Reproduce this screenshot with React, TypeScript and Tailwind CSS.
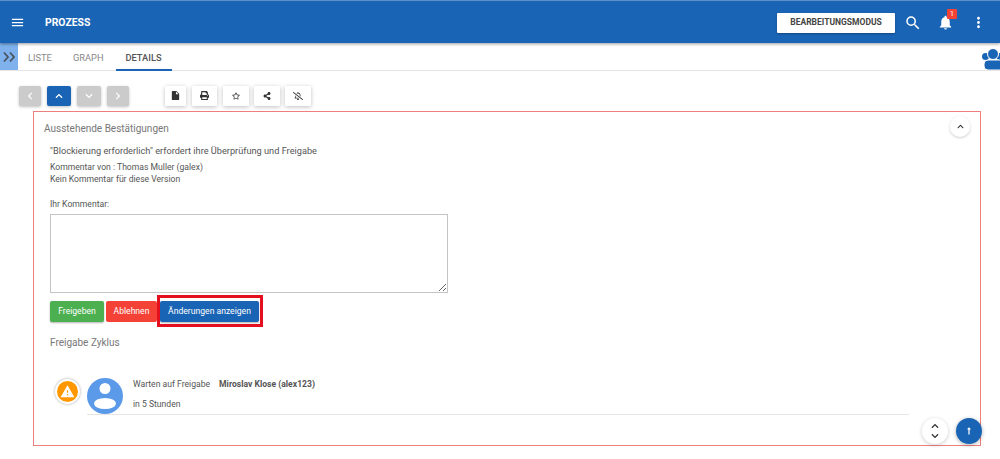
import React from "react";
import { MdMenu, MdSearch, MdNotifications, MdMoreVert, MdInsertDriveFile } from "react-icons/md";
import { FaChevronLeft, FaChevronRight, FaChevronUp, FaChevronDown, FaPrint, FaRegStar, FaShareAlt, FaRegBellSlash, FaLongArrowAltUp } from "react-icons/fa";

const navBtn = "h-[20px] rounded-[2px] flex items-center justify-center shadow-[0_1px_3px_rgba(0,0,0,0.25)] text-white";
const toolBtn = "h-[20px] rounded-[1px] bg-white flex items-center justify-center shadow-[0_1px_4px_rgba(0,0,0,0.25)] text-[#333]";

function Users() {
  return (
    <svg width="18" height="22" viewBox="0 0 18 22" fill="#1a64b5">
      <circle cx="3.5" cy="8.5" r="3.5" />
      <circle cx="18" cy="8.5" r="3.5" />
      <circle cx="11" cy="6" r="5.5" stroke="white" strokeWidth="1" />
      <rect x="2" y="12" width="22" height="10" rx="4" stroke="white" strokeWidth="1" />
    </svg>
  );
}

export default function App() {
  return (
    <div className="w-[1000px] h-[459px] overflow-hidden bg-white flex flex-col font-['Roboto','Liberation_Sans',sans-serif] text-[#555]">
      <header className="h-[43px] shrink-0 bg-[#1a64b5] border-t border-[#5d8fc9] shadow-[0_1px_3px_rgba(0,0,0,0.4)] flex items-center pl-[10px] pr-[13px] pt-[1px] relative z-10 text-white">
        <MdMenu size={15} />
        <span className="ml-[20px] text-[10.4px] font-bold">PROZESS</span>
        <div className="ml-auto flex items-center">
          <button className="w-[118px] h-[20px] bg-white rounded-[1px] text-[#444] text-[8.5px] font-bold shadow-[0_1px_2px_rgba(0,0,0,0.3)]">BEARBEITUNGSMODUS</button>
          <MdSearch size={18} className="ml-[9px]" />
          <div className="relative ml-[15px]">
            <MdNotifications size={17} />
            <span className="absolute -top-[5px] left-[10px] w-[10px] h-[10px] rounded-[1px] bg-[#f44336] text-[7px] leading-[10px] text-center">1</span>
          </div>
          <MdMoreVert size={17} className="ml-[16px]" />
        </div>
      </header>

      <div className="h-[28px] shrink-0 flex border-b border-[#e5e5e5] relative">
        <div className="w-[18px] h-full bg-[#7fb2ec] flex items-center justify-center text-[#4a5560]">
          <svg width="12" height="12" viewBox="0 0 12 12" fill="none" stroke="currentColor" strokeWidth="1.8">
            <polyline points="1,1.5 5,6 1,10.5" />
            <polyline points="7,1.5 11,6 7,10.5" />
          </svg>
        </div>
        <div className="ml-[10px] flex text-[9.3px] leading-[29px]">
          <span className="text-[#888]">LISTE</span>
          <span className="ml-[21px] text-[#888]">GRAPH</span>
          <span className="ml-[12px] w-[56px] text-center text-[#555] font-medium border-b-2 border-[#1a64b5] h-[28px]">DETAILS</span>
        </div>
        <div className="absolute right-0 top-[5px] overflow-hidden"><Users /></div>
      </div>

      <div className="h-[40px] shrink-0 flex items-center pt-[9px] pl-[19px]">
        <div className={`${navBtn} w-[22px] bg-[#cbcbcb]`}><FaChevronLeft size={8} /></div>
        <div className={`${navBtn} ml-[6px] w-[24px] bg-[#1a64b5]`}><FaChevronUp size={8} /></div>
        <div className={`${navBtn} ml-[6px] w-[24px] bg-[#cbcbcb]`}><FaChevronDown size={8} /></div>
        <div className={`${navBtn} ml-[6px] w-[22px] bg-[#cbcbcb]`}><FaChevronRight size={8} /></div>
        <div className={`${toolBtn} ml-[36px] w-[21px]`}><MdInsertDriveFile size={11} /></div>
        <div className={`${toolBtn} ml-[6px] w-[25px]`}><FaPrint size={9} /></div>
        <div className={`${toolBtn} ml-[6px] w-[26px]`}><FaRegStar size={8} /></div>
        <div className={`${toolBtn} ml-[5px] w-[26px]`}><FaShareAlt size={8} /></div>
        <div className={`${toolBtn} ml-[5px] w-[26px]`}><FaRegBellSlash size={10} /></div>
      </div>

      <section className="relative ml-[33px] w-[948px] h-[335px] border border-[#ef7f7f]">
        <h2 className="mt-[10px] ml-[10px] text-[10px] leading-[13px] text-[#777]">Ausstehende Bestätigungen</h2>
        <button className="absolute right-[10px] top-[4px] w-[20px] h-[21px] rounded-full bg-white shadow-[0_1px_3px_rgba(0,0,0,0.2)] flex items-center justify-center text-[#333]">
          <FaChevronUp size={7} />
        </button>
        <div className="ml-[16px] flex flex-col items-start">
          <p className="mt-[10px] text-[9.2px] leading-[12px]">"Blockierung erforderlich" erfordert ihre Überprüfung und Freigabe</p>
          <p className="mt-[4px] text-[8.6px] leading-[12px]">Kommentar von : Thomas Muller (galex)</p>
          <p className="text-[8.6px] leading-[12px]">Kein Kommentar für diese Version</p>
          <p className="mt-[13px] text-[8.6px] leading-[12px]">Ihr Kommentar:</p>
          <textarea className="mt-[4px] w-[398px] h-[79px] border border-[#c4c4c4] bg-white block" />
          <div className="mt-[8px] flex items-center">
            <button className="w-[54px] h-[21px] rounded-[2px] bg-[#4caf50] text-white text-[8.6px] shadow-[0_1px_2px_rgba(0,0,0,0.3)]">Freigeben</button>
            <button className="ml-[2px] w-[51px] h-[21px] rounded-[2px] bg-[#f44336] text-white text-[8.6px]">Ablehnen</button>
            <div className="relative ml-[3px]">
              <button className="block w-[99px] h-[21px] rounded-[2px] bg-[#1a64b5] text-white text-[8.6px] shadow-[0_1px_2px_rgba(0,0,0,0.3)]">Änderungen anzeigen</button>
              <div className="absolute -left-[3px] -top-[6px] w-[106px] h-[32px] border-[3px] border-[#e4101f] pointer-events-none" />
            </div>
          </div>
          <p className="mt-[14px] text-[10px] leading-[13px] text-[#777]">Freigabe Zyklus</p>
          <div className="mt-[29px] ml-[5px] flex items-start">
            <div className="mt-[1px] w-[25px] h-[25px] rounded-full bg-[#ff9800] border-2 border-white shadow-[0_0_3px_rgba(0,0,0,0.35)] flex items-center justify-center">
              <svg width="15" height="15" viewBox="0 0 24 24" fill="white" fillRule="evenodd">
                <path d="M1 21h22L12 2 1 21zm12-3h-2v-2h2v2zm0-4h-2v-4h2v4z" />
              </svg>
            </div>
            <div className="ml-[7px] w-[822px] h-[37px] border-b border-[#e6e6e6] flex items-start">
              <svg width="36" height="36" viewBox="0 0 36 36" className="shrink-0">
                <circle cx="18" cy="18" r="18" fill="#5a9ae8" />
                <circle cx="18" cy="10.5" r="5.5" fill="white" />
                <ellipse cx="18" cy="25.5" rx="11" ry="5.5" fill="white" />
              </svg>
              <div className="ml-[10px] text-[8.6px] leading-[12px]">
                <div><span>Warten auf Freigabe</span><span className="ml-[9px] font-bold">Miroslav Klose (alex123)</span></div>
                <div className="mt-[8px]">in 5 Stunden</div>
              </div>
            </div>
          </div>
        </div>
        <button className="absolute right-[32px] bottom-[1px] w-[26px] h-[26px] rounded-full bg-white shadow-[0_1px_4px_rgba(0,0,0,0.2)] flex flex-col items-center justify-center gap-[2px] text-[#333]">
          <FaChevronUp size={8} />
          <FaChevronDown size={8} />
        </button>
        <button className="absolute right-[-2px] bottom-[1px] w-[26px] h-[26px] rounded-full bg-[#1a64b5] shadow-[0_1px_4px_rgba(0,0,0,0.3)] flex items-center justify-center text-white">
          <FaLongArrowAltUp size={8} />
        </button>
      </section>
    </div>
  );
}
